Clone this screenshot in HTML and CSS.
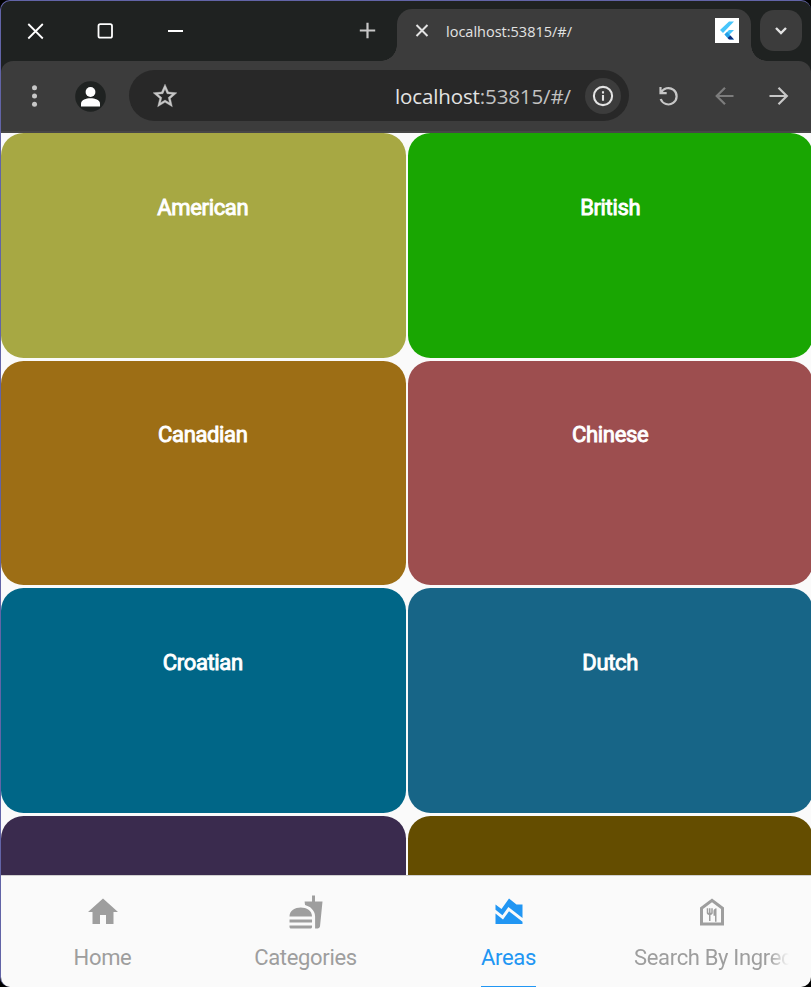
FILE: index.html
```html
<!DOCTYPE html>
<html lang="en">
<head>
<meta charset="utf-8">
<title>localhost:53815/#/</title>
<link rel="stylesheet" href="styles.css">
</head>
<body>
<div class="window">
  <header class="tabstrip">
    <div class="controls">
      <svg width="70" height="60" viewBox="0 0 70 60"><path d="M27.300 23l14.500 14.500M41.800 23L27.300 37.500"/></svg>
      <svg width="70" height="60" viewBox="0 0 70 60"><rect x="27.500" y="23.200" width="13.500" height="13.500" rx="1.800"/></svg>
      <svg width="70" height="60" viewBox="0 0 70 60"><path d="M27 30h15"/></svg>
    </div>
    <svg class="plus" width="18" height="18" viewBox="0 0 18 18"><path d="M8.500 .800v15.400M.800 8.500h15.400"/></svg>
    <div class="tab">
      <svg class="close" width="14" height="14" viewBox="0 0 14 14"><path d="M1.500 1l11 11M12.500 1l-11 11"/></svg>
      <span class="tab-title">localhost:53815/#/</span>
      <span class="favicon"><svg width="24" height="25" viewBox="0 0 24 25"><path fill="#47c5fb" d="M14 3.500h5L8 15l-3-3z"/><path fill="#47c5fb" d="M14 12h5l-5 5 5 4.500h-4L9.500 16.500z"/><path fill="#26a0e8" d="M9.500 16.500l2.500-2.500 3.500 3.500-3 2.500z"/><path fill="#0b2d80" d="M12.500 20l3-2.500 3.500 4h-5z"/></svg></span>
    </div>
    <div class="dropdown"><svg width="14" height="10" viewBox="0 0 14 10"><path d="M2 2l5 5 5-5"/></svg></div>
  </header>
  <div class="toolbar">
    <svg class="dots" width="8" height="26" viewBox="0 0 8 26"><circle cx="4.500" cy="4.700" r="2.500"/><circle cx="4.500" cy="13" r="2.500"/><circle cx="4.500" cy="21.300" r="2.500"/></svg>
    <svg class="avatar" width="31" height="31" viewBox="0 0 31 31"><circle cx="15.500" cy="15.500" r="15.300" fill="#1f2221"/><circle cx="15.500" cy="11" r="4.900" fill="#fff"/><path fill="#fff" d="M6 25.500v-2.800c0-3.800 5.200-5.400 9.500-5.400s9.500 1.600 9.500 5.400v2.800z"/></svg>
    <div class="address">
      <svg class="star" width="30" height="30" viewBox="0 0 24 24"><path stroke="#c7c7c7" stroke-width=".3" d="M21.500 9.440l-6.690-.62L12 2.500 9.190 8.830 2.500 9.440l5.260 4.530L6.120 20.600 12 17.070l5.880 3.530-1.530-6.630L21.500 9.440zM12 15.200l-3.560 2.170 1-4.080-3.220-2.780 4.180-.38L12 6.300l1.610 3.830 4.180.38-3.220 2.780 1 4.080L12 15.200z"/></svg>
      <span class="url">localhost<span>:53815/#/</span></span>
      <span class="info"><svg width="22" height="22" viewBox="0 0 22 22"><circle cx="11" cy="11" r="9.100"/><path d="M11 10v5.800M11 6.200v2.200"/></svg></span>
    </div>
    <svg class="nav reload" width="22" height="22" viewBox="0 0 22 22"><path d="M2.500 2v6.200h6.200M2.900 8a8.200 8.200 0 1 1-.2 6"/></svg>
    <svg class="nav back" width="20" height="20" viewBox="0 0 20 20"><path d="M18.500 10H2M10 1.700L1.700 10l8.300 8.300"/></svg>
    <svg class="nav forward" width="20" height="20" viewBox="0 0 20 20"><path d="M.500 10h17M9.500 1.700l8.300 8.300-8.300 8.300"/></svg>
  </div>
  <main class="grid">
    <div class="tile american"><span>American</span></div>
    <div class="tile british"><span>British</span></div>
    <div class="tile canadian"><span>Canadian</span></div>
    <div class="tile chinese"><span>Chinese</span></div>
    <div class="tile croatian"><span>Croatian</span></div>
    <div class="tile dutch"><span>Dutch</span></div>
    <div class="tile violet"></div>
    <div class="tile olive"></div>
  </main>
  <nav class="bottom">
    <div class="item"><svg width="36" height="36" viewBox="0 0 24 24"><path d="M10 20v-6h4v6h5v-8h3L12 3 2 12h3v8z"/></svg><span>Home</span></div>
    <div class="item"><svg width="36" height="36" viewBox="0 0 24 24"><path d="M18.060 22.990h1.660c.84 0 1.530-.64 1.630-1.460L23 5.050h-5V1h-1.970v4.050h-4.970l.3 2.340c1.710.47 3.310 1.320 4.270 2.260 1.440 1.420 2.430 2.890 2.430 5.290v8.050zM1 21.990V21h15.030v.99c0 .55-.45 1-1.010 1H2.010c-.56 0-1.010-.45-1.010-1zm15.030-7c0-8-15.030-8-15.030 0h15.030zM1.020 17h15v2h-15z"/></svg><span>Categories</span></div>
    <div class="item active"><svg width="36" height="36" viewBox="0 0 24 24"><path d="M3 13v7h18v-1.500l-9-7L8 17l-5-4zm0-6l4 3 5-7 5 4h4v8.970l-9.400-7.310-3.980 5.480L3 10.440V7z"/></svg><span>Areas</span></div>
    <div class="item long"><svg width="36" height="36" viewBox="0 0 24 24"><path d="M12 5.500l6 4.500v9H6v-9l6-4.500M12 3L4 9v12h16V9L12 3zm-.5 6.500v3H11v-3h-1v3h-.5v-3h-1v3c0 .83.67 1.500 1.500 1.500v4h1v-4c.83 0 1.500-.67 1.500-1.500v-3h-1zm1.500 2v3h1v4h1v-9c-1.100 0-2 .9-2 2z"/></svg><span>Search By Ingredient</span></div>
  </nav>
</div>
</body>
</html>
```
FILE: styles.css
```css
* { box-sizing: border-box; }
html, body { margin: 0; height: 100%; overflow: hidden; background: #000; }
svg { display: block; flex: none; }

.window {
  width: 811px;
  height: 987px;
  display: flex;
  flex-direction: column;
  overflow: hidden;
  border: solid #6264a7;
  border-width: 1px 0 0 1px;
  border-radius: 10px;
  background: #1f2221;
}

.tabstrip { height: 60px; flex: none; display: flex; align-items: flex-start; }
.controls { display: flex; width: 358px; }
.controls svg { fill: none; stroke: #fff; stroke-width: 1.8; }
.plus { margin-top: 21px; fill: none; stroke: #c7c7c7; stroke-width: 2.2; }
.tab {
  position: relative;
  width: 354px;
  height: 52px;
  margin: 8px 0 0 20px;
  display: flex;
  align-items: center;
  padding: 0 12px 9px 18px;
  border-radius: 15px 15px 0 0;
  background: #3c3c3c;
}
.tab::before, .tab::after {
  content: "";
  position: absolute;
  bottom: 0;
  width: 16px;
  height: 16px;
}
.tab::before { left: -16px; background: radial-gradient(circle at 0 0, transparent 15.5px, #3c3c3c 16px); }
.tab::after { right: -16px; background: radial-gradient(circle at 100% 0, transparent 15.5px, #3c3c3c 16px); }
.close { fill: none; stroke: #e3e3e3; stroke-width: 2; }
.tab-title {
  margin: 2px auto 0 17px;
  font: 14.5px/20px "Open Sans", sans-serif;
  color: #e3e3e3;
  white-space: nowrap;
}
.favicon { width: 24px; height: 25px; background: #fff; }
.dropdown {
  width: 42px;
  height: 41px;
  margin: 9px 0 0 9px;
  display: grid;
  place-items: center;
  border-radius: 14px;
  background: #3c3c3c;
}
.dropdown svg { fill: none; stroke: #e3e3e3; stroke-width: 2.4; }

.toolbar {
  height: 72px;
  flex: none;
  display: flex;
  align-items: center;
  padding-left: 29px;
  border-bottom: 2px solid #474747;
  border-radius: 12px 12px 0 0;
  background: #3c3c3c;
}
.dots { fill: #c7c7c7; }
.avatar { margin-left: 37px; }
.address {
  width: 500px;
  height: 51px;
  margin: 0 0 1px 23px;
  display: flex;
  align-items: center;
  padding: 0 8px 0 21px;
  border-radius: 26px;
  background: #282828;
}
.star { fill: #c7c7c7; }
.url {
  margin: 0 14px 0 auto;
  font: 20.5px/30px "Open Sans", sans-serif;
  letter-spacing: -0.12px;
  color: #e3e3e3;
  white-space: nowrap;
}
.url span { color: #c2c2c2; }
.info {
  width: 36px;
  height: 36px;
  display: grid;
  place-items: center;
  border-radius: 50%;
  background: #3c3c3c;
}
.info svg { fill: none; stroke: #e3e3e3; stroke-width: 2.1; }
.nav { fill: none; stroke: #c7c7c7; stroke-width: 2.2; }
.reload { margin-left: 29px; }
.back { margin-left: 35px; stroke: #7c7c7c; }
.forward { margin-left: 34px; }

.grid {
  height: 742px;
  flex: none;
  overflow: hidden;
  display: grid;
  grid-template-columns: 404.6px 404.6px;
  grid-auto-rows: 224.6px;
  gap: 3px 2.8px;
  background: #fafafa;
}
.tile { border-radius: 22.5px; padding: 59.7px 1px 0 0; text-align: center; }
.tile span {
  font: 22px/30px Roboto, sans-serif;
  letter-spacing: -0.35px;
  color: #fff;
  -webkit-text-stroke: 0.9px #fff;
}
.american { background: #a7a843; }
.british { background: #19a602; }
.canadian { background: #9d6e15; }
.chinese { background: #9d4e4f; }
.croatian { background: #006687; }
.dutch { background: #176587; }
.violet { background: #3a2b4e; }
.olive { background: #644d00; }

.bottom {
  flex: 1;
  display: grid;
  grid-template-columns: repeat(4, 203px);
  border-top: 1px solid #d0d0d0;
  background: #fafafa;
}
.item {
  display: flex;
  flex-direction: column;
  align-items: center;
  padding: 18px 24px 0;
  color: #9e9e9e;
  font: 22px/30px Roboto, sans-serif;
  letter-spacing: -0.33px;
}
.item svg { fill: currentColor; }
.item span { height: 43px; padding-top: 13px; white-space: nowrap; }
.active { color: #2196f3; }
.item.active span { height: 57px; border-bottom: 1px solid; }
.long span {
  width: 155px;
  overflow: hidden;
  -webkit-mask-image: linear-gradient(90deg, #000 87%, transparent);
  mask-image: linear-gradient(90deg, #000 87%, transparent);
}
```
